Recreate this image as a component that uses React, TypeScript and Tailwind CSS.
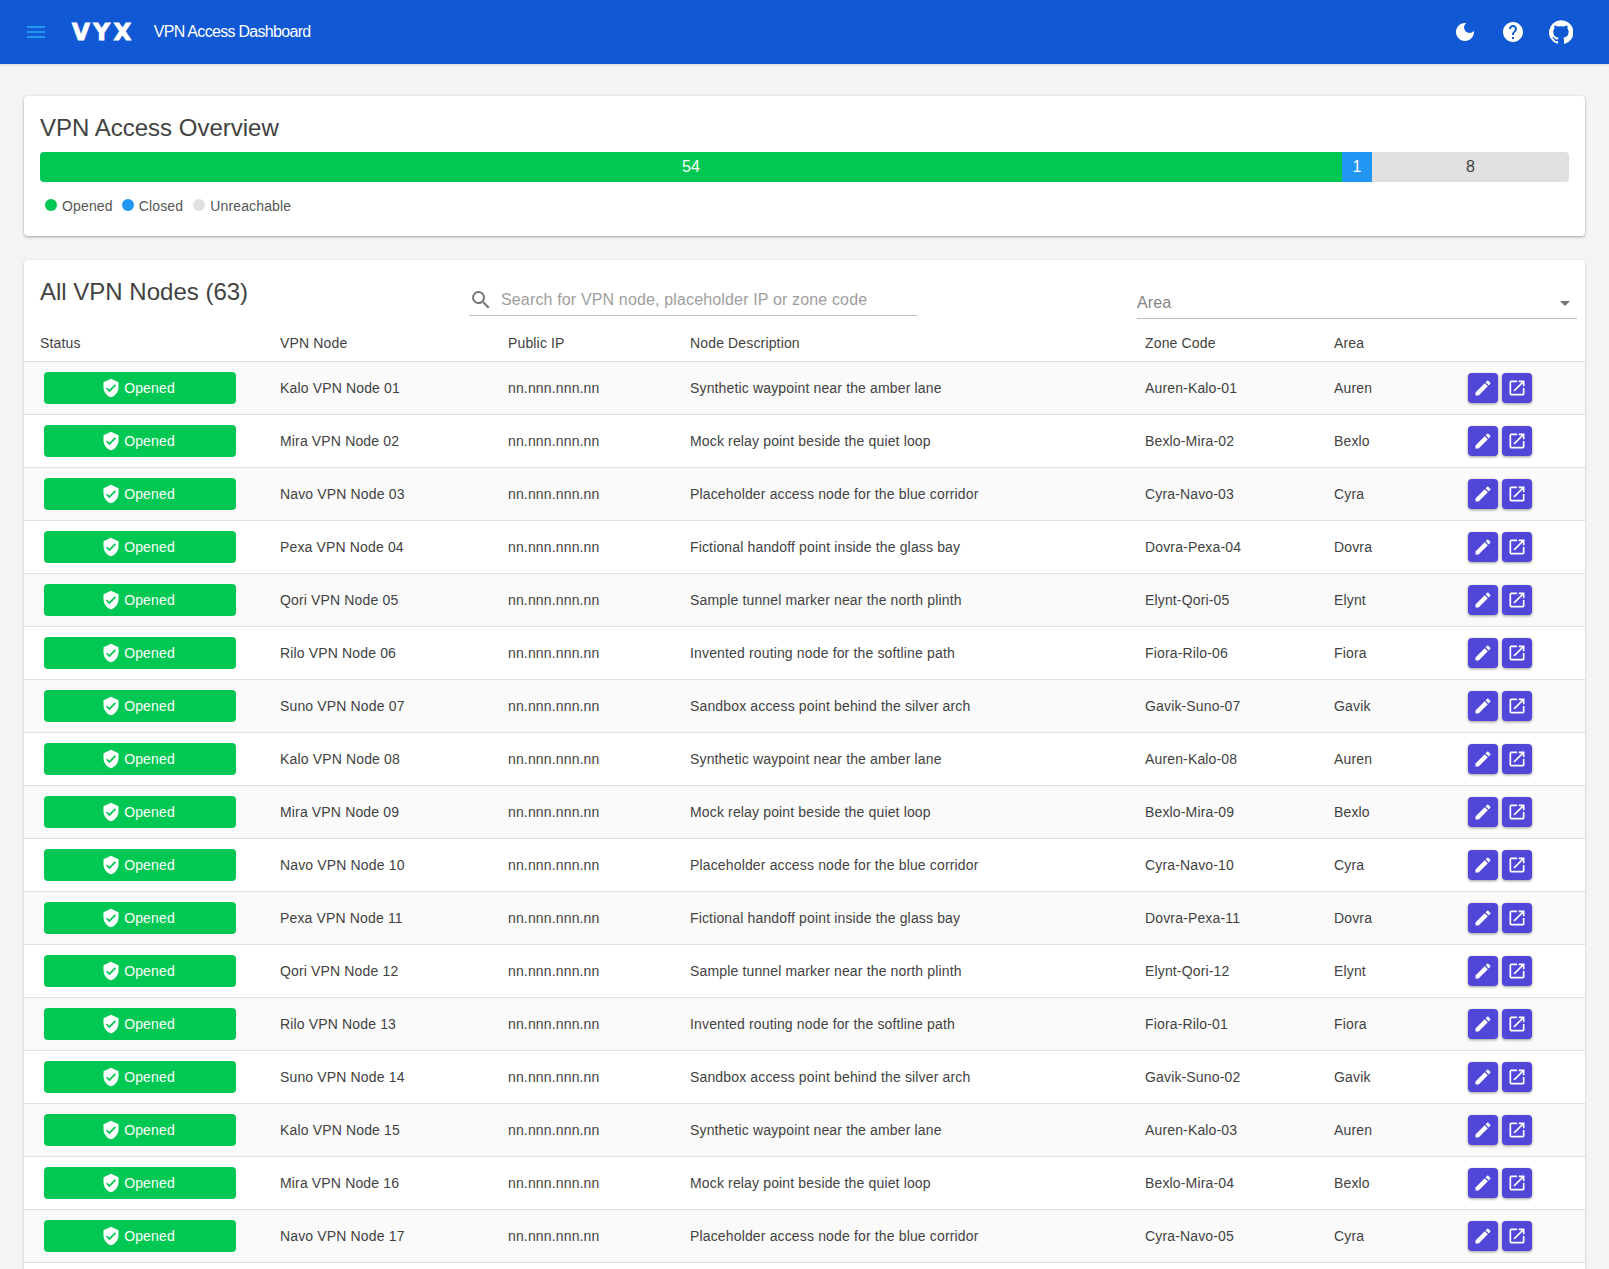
import { MdMenu, MdHelp, MdEdit, MdOpenInNew, MdSearch, MdArrowDropDown, MdVerifiedUser } from 'react-icons/md';

const places = [
  { name: 'Kalo', area: 'Auren', text: 'Synthetic waypoint near the amber lane' },
  { name: 'Mira', area: 'Bexlo', text: 'Mock relay point beside the quiet loop' },
  { name: 'Navo', area: 'Cyra', text: 'Placeholder access node for the blue corridor' },
  { name: 'Pexa', area: 'Dovra', text: 'Fictional handoff point inside the glass bay' },
  { name: 'Qori', area: 'Elynt', text: 'Sample tunnel marker near the north plinth' },
  { name: 'Rilo', area: 'Fiora', text: 'Invented routing node for the softline path' },
  { name: 'Suno', area: 'Gavik', text: 'Sandbox access point behind the silver arch' },
];

const two = (n: number) => String(n).padStart(2, '0');

const nodes = Array.from({ length: 17 }, (_, i) => {
  const place = places[i % 7];
  const zoneNo = i < 12 ? i + 1 : i - 11;
  return {
    title: `${place.name} VPN Node ${two(i + 1)}`,
    text: place.text,
    zone: `${place.area}-${place.name}-${two(zoneNo)}`,
    area: place.area,
  };
});

const rowGrid = 'grid grid-cols-[240px_228px_182px_455px_189px_150px_1fr] items-center';

function Moon() {
  return (
    <svg viewBox="0 0 24 24" width="24" height="24" fill="currentColor">
      <path d="M12 3c-4.97 0-9 4.03-9 9s4.03 9 9 9 9-4.03 9-9c0-.46-.04-.92-.1-1.36-.98 1.37-2.58 2.26-4.4 2.26-2.98 0-5.4-2.42-5.4-5.4 0-1.81.89-3.42 2.26-4.4-.44-.06-.9-.1-1.36-.1z" />
    </svg>
  );
}

function Github() {
  return (
    <svg viewBox="0 0 24 24" width="24" height="24" fill="currentColor">
      <path d="M12 .3a12 12 0 0 0-3.8 23.4c.6.1.8-.3.8-.6v-2c-3.3.7-4-1.6-4-1.6-.6-1.4-1.4-1.8-1.4-1.8-1-.7.1-.7.1-.7 1.2 0 1.9 1.2 1.9 1.2 1 1.8 2.8 1.3 3.5 1 0-.8.4-1.3.7-1.6-2.7-.3-5.5-1.3-5.5-5.9 0-1.2.5-2.3 1.3-3.1-.2-.4-.6-1.6 0-3.2 0 0 1-.3 3.4 1.2a11.5 11.5 0 0 1 6 0c2.3-1.5 3.3-1.2 3.3-1.2.6 1.6.2 2.8 0 3.2.9.8 1.3 1.9 1.3 3.2 0 4.6-2.8 5.6-5.5 5.9.5.4.9 1 .9 2.2v3.3c0 .3.1.7.8.6A12 12 0 0 0 12 .3" />
    </svg>
  );
}

function Header() {
  return (
    <header className="relative flex h-16 items-center bg-[#1058d4] pl-6 pr-9 text-white shadow-[0_1px_3px_rgba(0,0,0,0.12)]">
      <MdMenu className="text-[#2196f3]" size={24} />
      <span className="ml-6 font-['DejaVu_Sans',sans-serif] text-[23px] font-bold leading-none tracking-[3.5px] [-webkit-text-stroke:1px_white]">
        VYX
      </span>
      <span className="ml-[19px] text-base tracking-[-0.7px]">VPN Access Dashboard</span>
      <div className="ml-auto flex items-center gap-6">
        <Moon />
        <MdHelp size={24} />
        <Github />
      </div>
    </header>
  );
}

function Overview() {
  return (
    <section className="rounded bg-white px-4 pb-[22px] pt-4 shadow-[0_1px_3px_rgba(0,0,0,0.35)]">
      <h2 className="text-2xl leading-[32px] text-[#424242]">VPN Access Overview</h2>
      <div className="mt-2 flex h-[30px] overflow-hidden rounded text-base leading-[30px]">
        <div className="flex-[1302] bg-[#00c853] text-center text-white">54</div>
        <div className="flex-[30] bg-[#2196f3] text-center text-white">1</div>
        <div className="flex-[197] bg-[#e0e0e0] text-center text-[#424242]">8</div>
      </div>
      <div className="mt-4 flex h-[16px] items-center text-sm tracking-[0.15px] text-[#555]">
        <span className="ml-[5px] h-3 w-3 -translate-y-px rounded-full bg-[#00c853]" />
        <span className="ml-[5px]">Opened</span>
        <span className="ml-[9px] h-3 w-3 -translate-y-px rounded-full bg-[#2196f3]" />
        <span className="ml-[5px]">Closed</span>
        <span className="ml-[10px] h-3 w-3 -translate-y-px rounded-full bg-[#e0e0e0]" />
        <span className="ml-[5px]">Unreachable</span>
      </div>
    </section>
  );
}

function NodeRow({ node, odd }: { node: (typeof nodes)[number]; odd: boolean }) {
  return (
    <div className={`${rowGrid} h-[53px] border-b border-[#e0e0e0] text-sm tracking-[0.15px] text-[#424242] ${odd ? 'bg-[#fafafa]' : 'bg-white'}`}>
      <div className="pl-5">
        <div className="flex h-8 w-48 items-center justify-center gap-[3px] rounded bg-[#00c853] pr-1 text-white">
          <MdVerifiedUser size={20} />
          <span>Opened</span>
        </div>
      </div>
      <div className="pl-4">{node.title}</div>
      <div className="pl-4">nn.nnn.nnn.nn</div>
      <div className="pl-4">{node.text}</div>
      <div className="pl-4">{node.zone}</div>
      <div className="pl-4">{node.area}</div>
      <div className="flex gap-1">
        <button className="flex h-[30px] w-[30px] items-center justify-center rounded bg-[#5046d8] text-white shadow-[0_1px_3px_rgba(0,0,0,0.4)]">
          <MdEdit size={20} />
        </button>
        <button className="flex h-[30px] w-[30px] items-center justify-center rounded bg-[#5046d8] text-white shadow-[0_1px_3px_rgba(0,0,0,0.4)]">
          <MdOpenInNew size={20} />
        </button>
      </div>
    </div>
  );
}

function NodesTable() {
  return (
    <section className="mt-6 rounded bg-white shadow-[0_1px_3px_rgba(0,0,0,0.2)]">
      <div className="flex h-[61px] items-start">
        <h2 className="ml-4 mt-4 w-[429px] text-2xl leading-[32px] text-[#424242]">All VPN Nodes (63)</h2>
        <div className="mt-6 flex h-8 w-[448px] items-center gap-2 border-b border-[#bdbdbd] text-[#9e9e9e]">
          <MdSearch className="text-[#757575]" size={24} />
          <span className="text-base tracking-[0.15px]">Search for VPN node, placeholder IP or zone code</span>
        </div>
        <div className="ml-[220px] mt-[27px] flex h-8 w-[440px] items-center justify-between border-b border-[#bdbdbd] text-base tracking-[0.15px] text-[#858585]">
          <span>Area</span>
          <MdArrowDropDown className="text-[#757575]" size={24} />
        </div>
      </div>
      <div className={`${rowGrid} h-[41px] border-b border-[#e0e0e0] pt-1 text-sm tracking-[0.15px] text-[#424242]`}>
        <div className="pl-4">Status</div>
        <div className="pl-4">VPN Node</div>
        <div className="pl-4">Public IP</div>
        <div className="pl-4">Node Description</div>
        <div className="pl-4">Zone Code</div>
        <div className="pl-4">Area</div>
        <div />
      </div>
      {nodes.map((node, i) => (
        <NodeRow key={node.title} node={node} odd={i % 2 === 0} />
      ))}
      <div className="h-[53px]" />
    </section>
  );
}

export default function App() {
  return (
    <div className="h-screen overflow-hidden bg-[#f4f4f4] font-['Liberation_Sans',Arial,sans-serif]">
      <Header />
      <main className="px-6 pt-8">
        <Overview />
        <NodesTable />
      </main>
    </div>
  );
}
